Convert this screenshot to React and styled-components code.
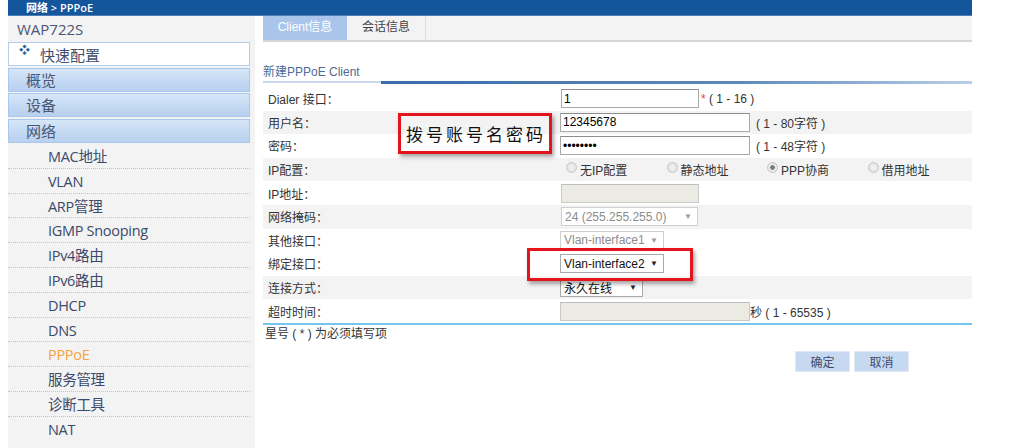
import React from 'react'
import styled, { createGlobalStyle } from 'styled-components'

const GlobalStyle = createGlobalStyle`
    body {
        margin: 0 0 0 8px;
        background: #fff;
        font-family: "Liberation Sans", "Noto Sans CJK SC", sans-serif;
        overflow: hidden;
    }
`

const subItems = ['MAC地址', 'VLAN', 'ARP管理', 'IGMP Snooping', 'IPv4路由', 'IPv6路由', 'DHCP', 'DNS', 'PPPoE', '服务管理', '诊断工具', 'NAT']

const App = () => {
    return (
        <Page>
            <GlobalStyle />
            <TopBar>网络 &gt; PPPoE</TopBar>
            <Body>
                <Sidebar>
                    <Brand>WAP722S</Brand>
                    <QuickBox>
                        <Diamond>❖</Diamond>
                        快速配置
                    </QuickBox>
                    <MenuHead>概览</MenuHead>
                    <MenuHead>设备</MenuHead>
                    <MenuHead>网络</MenuHead>
                    <SubList>
                        {subItems.map(item => (
                            <SubItem key={item} $active={item === 'PPPoE'}>{item}</SubItem>
                        ))}
                    </SubList>
                </Sidebar>

                <Main>
                    <Tabs>
                        <Tab $active>Client信息</Tab>
                        <Tab>会话信息</Tab>
                    </Tabs>

                    <SectionTitle>新建PPPoE Client</SectionTitle>
                    <Underline>
                        <LineLight />
                        <LineBlue />
                    </Underline>

                    <Table>
                        <Row>
                            <Label>Dialer 接口：</Label>
                            <Value>
                                <Input $width={138} value="1" readOnly />
                                <Hint><Star>*</Star> ( 1 - 16 )</Hint>
                            </Value>
                        </Row>
                        <Row $gray>
                            <Label>用户名：</Label>
                            <Value $shift={-1}>
                                <Input $width={190} value="12345678" readOnly />
                                <Hint $gap={6}>( 1 - 80字符 )</Hint>
                            </Value>
                        </Row>
                        <Row>
                            <Label>密码：</Label>
                            <Value $shift={-1}>
                                <Input $width={190} type="password" value="12345678" readOnly />
                                <Hint $gap={6}>( 1 - 48字符 )</Hint>
                            </Value>
                        </Row>
                        <Row $gray>
                            <Label>IP配置：</Label>
                            <Value $shift={5}>
                                <RadioOption><Radio />无IP配置</RadioOption>
                                <RadioOption><Radio />静态地址</RadioOption>
                                <RadioOption><Radio $checked />PPP协商</RadioOption>
                                <RadioOption><Radio />借用地址</RadioOption>
                            </Value>
                        </Row>
                        <Row>
                            <Label>IP地址：</Label>
                            <Value>
                                <Input $width={138} $disabled readOnly value="" />
                            </Value>
                        </Row>
                        <Row $gray>
                            <Label>网络掩码：</Label>
                            <Value>
                                <Select $width={137} $disabled>
                                    <span>24 (255.255.255.0)</span>
                                    <Arrow $disabled>▼</Arrow>
                                </Select>
                            </Value>
                        </Row>
                        <Row>
                            <Label>其他接口：</Label>
                            <Value $shift={-1}>
                                <Select $width={104} $disabled>
                                    <span>Vlan-interface1</span>
                                    <Arrow $disabled>▼</Arrow>
                                </Select>
                            </Value>
                        </Row>
                        <Row>
                            <Label>绑定接口：</Label>
                            <Value $shift={-1}>
                                <Select $width={104}>
                                    <span>Vlan-interface2</span>
                                    <Arrow>▼</Arrow>
                                </Select>
                            </Value>
                        </Row>
                        <Row $gray>
                            <Label>连接方式：</Label>
                            <Value $shift={-1}>
                                <Select $width={83}>
                                    <span>永久在线</span>
                                    <Arrow>▼</Arrow>
                                </Select>
                            </Value>
                        </Row>
                        <Row>
                            <Label>超时时间：</Label>
                            <Value $shift={-1}>
                                <Input $width={190} $disabled readOnly value="" />
                                <Hint $gap={0}>秒 ( 1 - 65535 )</Hint>
                            </Value>
                        </Row>
                    </Table>

                    <Note>星号 ( * ) 为必须填写项</Note>
                    <Buttons>
                        <Button>确定</Button>
                        <Button>取消</Button>
                    </Buttons>

                    <Callout $left={143} $top={97} $width={154} $height={41}>
                        <CalloutText>拨号账号名密码</CalloutText>
                    </Callout>
                    <Callout $left={272} $top={232} $width={166} $height={33} />
                </Main>
            </Body>
        </Page>
    )
}

const Page = styled.div`
    width: 964px;
`

const TopBar = styled.div`
    height: 16px;
    line-height: 16px;
    background: #14569b;
    color: #fff;
    font-family: "Open Sans", "Noto Sans CJK SC", sans-serif;
    font-size: 11px;
    font-weight: 600;
    padding-left: 18px;
    border-bottom: 1px solid #4d7fb5;
    box-sizing: border-box;
`

const Body = styled.div`
    display: flex;
    height: 432px;
`

const Sidebar = styled.div`
    width: 247px;
    background: #f3f3f3;
    padding-right: 5px;
    box-sizing: border-box;
    font-family: "Open Sans", "Noto Sans CJK SC", sans-serif;
    color: #455473;
    font-size: 15px;
`

const Brand = styled.div`
    height: 26px;
    line-height: 26px;
    padding-left: 9px;
    font-size: 15px;
    color: #4a5674;
`

const QuickBox = styled.div`
    height: 24px;
    line-height: 24px;
    background: #fff;
    border: 1px solid #b4cdec;
    box-sizing: border-box;
    padding-left: 10px;
    color: #3f4e6e;
`

const Diamond = styled.span`
    color: #2d5fa8;
    font-size: 11px;
    vertical-align: top;
    position: relative;
    top: -5px;
    margin-right: 10px;
`

const MenuHead = styled.div`
    height: 24px;
    line-height: 23px;
    margin-top: 1.5px;
    padding-left: 17px;
    box-sizing: border-box;
    border: 1px solid #aac7ec;
    background: linear-gradient(#d7e6f8, #c2d8f2 60%, #b8d0ef);
    color: #4a5674;
`

const SubList = styled.div`
    padding-top: 1.5px;
`

const SubItem = styled.div`
    height: 24.8px;
    line-height: 25px;
    padding-left: 40px;
    box-sizing: border-box;
    border-bottom: 1px dotted #c4c4c4;
    font-size: 14.5px;
    letter-spacing: -0.3px;
    color: ${p => (p.$active ? '#f4a53a' : '#3b4a6b')};
    &:last-child {
        border-bottom: none;
    }
`

const Main = styled.div`
    position: relative;
    flex: 1;
    padding-left: 8px;
    font-size: 12px;
    color: #333;
`

const Tabs = styled.div`
    display: flex;
    height: 24px;
    background: #f3f3f3;
    border-bottom: 2px solid #d6d6d6;
`

const Tab = styled.div`
    width: ${p => (p.$active ? '84px' : '78px')};
    text-align: center;
    line-height: 22px;
    font-size: 12px;
    color: ${p => (p.$active ? '#fff' : '#444')};
    background: ${p => (p.$active ? '#a9c5ea' : 'transparent')};
    border-right: ${p => (p.$active ? 'none' : '1px solid #dcdcdc')};
`

const SectionTitle = styled.div`
    margin-top: 22px;
    height: 17px;
    line-height: 16px;
    color: #4d6a93;
    font-size: 12px;
`

const Underline = styled.div`
    display: flex;
    align-items: flex-start;
`

const LineLight = styled.div`
    width: 118px;
    height: 2px;
    background: #c8d7ea;
`

const LineBlue = styled.div`
    flex: 1;
    height: 3px;
    background: linear-gradient(90deg, #3a6ca8, #5d88bd 60%, #b9cfe8);
`

const Table = styled.div`
    margin-top: 3px;
    border-bottom: 2px solid #74c6f0;
`

const Row = styled.div`
    display: flex;
    align-items: center;
    height: 23.6px;
    background: ${p => (p.$gray ? '#f3f3f3' : '#fff')};
`

const Label = styled.div`
    width: 298px;
    padding-left: 5px;
    box-sizing: border-box;
    font-size: 12px;
    color: #333;
`

const Value = styled.div`
    display: flex;
    align-items: center;
    margin-left: ${p => p.$shift || 0}px;
`

const Input = styled.input`
    width: ${p => p.$width}px;
    height: 19px;
    box-sizing: border-box;
    border: 1px solid ${p => (p.$disabled ? '#c9c9c9' : '#a9a9a9')};
    border-top-color: ${p => (p.$disabled ? '#bdbdbd' : '#8e8e8e')};
    background: ${p => (p.$disabled ? '#ebebe4' : '#fff')};
    font-family: "Liberation Sans", sans-serif;
    font-size: 12px;
    color: #000;
    padding: 0 2px;
    margin: 0;
    outline: none;
`

const Hint = styled.span`
    margin-left: ${p => (p.$gap === undefined ? 2 : p.$gap)}px;
    font-size: 12px;
    color: #333;
    white-space: pre;
`

const Star = styled.span`
    color: #e8424a;
`

const RadioOption = styled.label`
    display: flex;
    align-items: center;
    width: 100.5px;
    font-size: 12px;
    color: #333;
`

const Radio = styled.span`
    width: 9px;
    height: 9px;
    border-radius: 50%;
    border: 1px solid #c6c6c6;
    background: radial-gradient(circle, ${p => (p.$checked ? '#7a7a7a 0 2px, #e9e9e9 2.5px' : '#f4f4f4, #dcdcdc')});
    margin-right: 3px;
    position: relative;
    top: -2px;
    flex-shrink: 0;
`

const Select = styled.div`
    display: flex;
    align-items: center;
    justify-content: space-between;
    width: ${p => p.$width}px;
    height: 19px;
    box-sizing: border-box;
    padding: 0 5px 0 3px;
    border: 1px solid ${p => (p.$disabled ? '#cfcfcf' : '#a9a9a9')};
    background: #fff;
    color: ${p => (p.$disabled ? '#8c8c8c' : '#111')};
    font-size: 12px;
    white-space: nowrap;
`

const Arrow = styled.span`
    font-size: 8px;
    color: ${p => (p.$disabled ? '#999' : '#222')};
    margin-left: 4px;
`

const Note = styled.div`
    margin-top: 1px;
    padding-left: 2px;
    font-size: 12px;
    color: #333;
    line-height: 16px;
`

const Buttons = styled.div`
    display: flex;
    gap: 4px;
    margin-top: 9px;
    padding-left: 532px;
`

const Button = styled.button`
    width: 55px;
    height: 21px;
    padding: 0;
    background: #c6d9f1;
    border: 1px solid #e0eaf7;
    color: #3d4c6b;
    font-family: "Liberation Sans", "Noto Sans CJK SC", sans-serif;
    font-size: 12px;
`

const Callout = styled.div`
    position: absolute;
    left: ${p => p.$left}px;
    top: ${p => p.$top}px;
    width: ${p => p.$width}px;
    height: ${p => p.$height}px;
    box-sizing: border-box;
    border: 3px solid #e3141c;
    box-shadow: 2px 3px 4px rgba(0, 0, 0, 0.35);
    display: flex;
    align-items: center;
    padding-left: 5px;
`

const CalloutText = styled.span`
    font-family: "Noto Sans CJK SC", sans-serif;
    font-size: 17px;
    font-weight: 400;
    letter-spacing: 3px;
    color: #111;
`

export default App
